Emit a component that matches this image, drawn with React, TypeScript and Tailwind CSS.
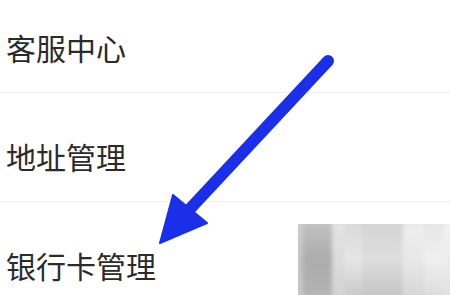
import React from 'react';

const rows = ['客服中心', '地址管理', '银行卡管理'];

// blurred mosaic columns of the watermark, left to right
const mosaic = [
  'w-[8px] bg-gradient-to-b from-[#cfcfcf] via-[#c4c4c4] to-[#c8c8c8]',
  'w-[28px] bg-gradient-to-b from-[#c2c2c2] via-[#acacac] to-[#b4b4b4]',
  'w-[12px] bg-gradient-to-b from-[#e4e4e4] via-[#dcdcdc] to-[#d2d2d2]',
  'w-[16px] bg-gradient-to-b from-[#dadada] via-[#e6e6e6] to-[#c9c9c9]',
  'w-[40px] bg-gradient-to-b from-[#d4d4d4] via-[#dedede] to-[#c4c4c4]',
  'w-[20px] bg-gradient-to-b from-[#eeeeee] via-[#e8e8e8] to-[#d6d6d6]',
  'w-[18px] bg-gradient-to-b from-[#e6e6e6] via-[#f0f0f0] to-[#dcdcdc]',
  'w-[10px] bg-gradient-to-b from-[#f2f2f2] via-[#ececec] to-[#e2e2e2]',
];

function Arrow() {
  return (
    <svg className="absolute left-0 top-0 pointer-events-none" width="450" height="295" viewBox="0 0 450 295">
      <line x1="328" y1="61" x2="188" y2="211" stroke="#1b2ee8" strokeWidth="12" strokeLinecap="round" />
      <polygon points="160,243 173,195 207,223" fill="#1b2ee8" stroke="#1b2ee8" strokeWidth="2" strokeLinejoin="round" />
    </svg>
  );
}

function Watermark() {
  return (
    <div className="absolute left-[298px] top-[224px] w-[152px] h-[71px] overflow-hidden bg-[#d4d4d4]">
      <div className="flex h-full blur-[2px] scale-105">
        {mosaic.map((c, i) => (
          <div key={i} className={`h-full ${c}`} />
        ))}
      </div>
    </div>
  );
}

export default function App() {
  return (
    <div className="relative w-[450px] h-[295px] overflow-hidden bg-white font-['Noto_Sans_CJK_SC','Noto_Sans',sans-serif] text-[#2b2b2b]">
      <div className="flex flex-col -mt-[16px]">
        {rows.map((label, i) => (
          <div
            key={label}
            className={`flex items-center h-[109px] pt-[17px] pl-[6px] ${i < rows.length - 1 ? 'border-b border-[#f1f1f1]' : ''}`}
          >
            <span className="text-[30px] leading-none">{label}</span>
          </div>
        ))}
      </div>
      <Arrow />
      <Watermark />
    </div>
  );
}
